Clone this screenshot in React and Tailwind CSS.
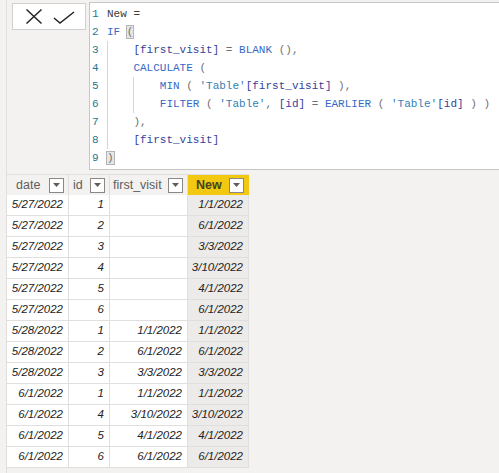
import React from 'react';

const rows = [
  ['5/27/2022', '1', '', '1/1/2022'],
  ['5/27/2022', '2', '', '6/1/2022'],
  ['5/27/2022', '3', '', '3/3/2022'],
  ['5/27/2022', '4', '', '3/10/2022'],
  ['5/27/2022', '5', '', '4/1/2022'],
  ['5/27/2022', '6', '', '6/1/2022'],
  ['5/28/2022', '1', '1/1/2022', '1/1/2022'],
  ['5/28/2022', '2', '6/1/2022', '6/1/2022'],
  ['5/28/2022', '3', '3/3/2022', '3/3/2022'],
  ['6/1/2022', '1', '1/1/2022', '1/1/2022'],
  ['6/1/2022', '4', '3/10/2022', '3/10/2022'],
  ['6/1/2022', '5', '4/1/2022', '4/1/2022'],
  ['6/1/2022', '6', '6/1/2022', '6/1/2022'],
];

// token helpers
const F = ({ children }) => <span className="text-[#3569c4]">{children}</span>;
const C = ({ children }) => <span className="text-[#33429a]">{children}</span>;
const T = ({ children }) => <span className="text-[#3380b5]">{children}</span>;
const P = ({ children }) => <span className="text-[#707070]">{children}</span>;

const codeLines = [
  <span className="text-[#3b3b3b]">New =</span>,
  <>
    <F>IF</F> <span className="bg-[#e6e6e6] outline outline-1 outline-[#b4b4b4] text-[#6e6e6e]">(</span>
  </>,
  <>
    {'    '}<C>[first_visit]</C> <P>=</P> <F>BLANK</F> <P>(),</P>
  </>,
  <>
    {'    '}<F>CALCULATE</F> <P>(</P>
  </>,
  <>
    {'        '}<F>MIN</F> <P>(</P> <T>'Table'</T><C>[first_visit]</C> <P>),</P>
  </>,
  <>
    {'        '}<F>FILTER</F> <P>(</P> <T>'Table'</T><P>,</P> <C>[id]</C> <P>=</P> <F>EARLIER</F> <P>(</P> <T>'Table'</T><C>[id]</C> <P>)</P> <P>)</P>
  </>,
  <>
    {'    '}<P>),</P>
  </>,
  <>
    {'    '}<C>[first_visit]</C>
  </>,
  <span className="bg-[#e6e6e6] outline outline-1 outline-[#b4b4b4] text-[#6e6e6e]">)</span>,
];

function Dropdown() {
  return (
    <div className="w-[15px] h-[15px] border border-[#8a8886] bg-white flex items-center justify-center shrink-0">
      <svg width="7" height="4" viewBox="0 0 7 4">
        <path d="M0 0 L7 0 L3.5 4 Z" fill="#605e5c" />
      </svg>
    </div>
  );
}

const widths = ['w-[62px]', 'w-[41px]', 'w-[78px]', 'w-[61px]'];
const headPad = ['pl-[9px]', 'pl-[4px]', 'pl-[3px]', 'pl-[8px]'];

export default function App() {
  return (
    <div className="w-[499px] h-[473px] overflow-hidden bg-[#f3f2f1] pl-[6px]" style={{ fontFamily: '"Liberation Sans", Arial, sans-serif' }}>
      <div className="h-full border-l border-[#e1dfdd]">
        {/* formula bar */}
        <div className="flex pt-[2px]">
          <div className="ml-[5px] mt-[1px] w-[74px] h-[27px] bg-white border border-[#d2d0ce] flex items-center">
            <svg width="18" height="17" viewBox="0 0 18 17" className="ml-[12px]">
              <path d="M1.5 1.5 L16.5 15.5 M16.5 1.5 L1.5 15.5" stroke="#252423" strokeWidth="1.5" fill="none" />
            </svg>
            <svg width="22" height="14" viewBox="0 0 22 14" className="ml-[10px] mt-[2px]">
              <path d="M1 7 L7 12 L21 1" stroke="#252423" strokeWidth="1.5" fill="none" />
            </svg>
          </div>
          <div className="ml-[3px] flex-1 h-[168px] bg-white border-t border-b border-l border-[#c8c6c4] relative pt-[2px]" style={{ fontFamily: '"Liberation Mono", "Courier New", monospace' }}>
            <div className="absolute left-[17px] top-[38px] h-[108px] w-px bg-[#d6d6d6]" />
            <div className="absolute left-[43px] top-[74px] h-[36px] w-px bg-[#d6d6d6]" />
            {codeLines.map((line, i) => (
              <div key={i} className="flex h-[18px] items-center text-[11px] leading-[18px]">
                <span className="w-[17px] pl-[2px] text-[#237893]">{i + 1}</span>
                <span className="whitespace-pre">{line}</span>
              </div>
            ))}
          </div>
        </div>

        {/* data table */}
        <div className="mt-[4px] w-[242px]">
          <div className="flex h-[21px] border-t border-[#e1dfdd]">
            {['date', 'id', 'first_visit', 'New'].map((h, i) => (
              <div
                key={h}
                className={`${widths[i]} ${headPad[i]} h-[21px] flex items-center justify-between pr-[4px] border-r border-b border-[#e1dfdd] text-[12.5px] ${i === 3 ? 'bg-[#f2c811] text-[#45441f] font-semibold border-[#f2c811]' : 'bg-[#f3f2f1] text-[#605e5c]'}`}
              >
                <span>{h}</span>
                <Dropdown />
              </div>
            ))}
          </div>
          {rows.map((r, ri) => (
            <div key={ri} className="flex h-[21px]">
              {r.map((v, ci) => (
                <div
                  key={ci}
                  className={`${widths[ci]} h-[21px] flex items-center justify-end pr-[5px] border-r border-b border-[#e1dfdd] italic text-[11.5px] text-[#252423] ${ci === 3 ? 'bg-[#edebe9]' : 'bg-white'}`}
                >
                  {v}
                </div>
              ))}
            </div>
          ))}
        </div>
      </div>
    </div>
  );
}
